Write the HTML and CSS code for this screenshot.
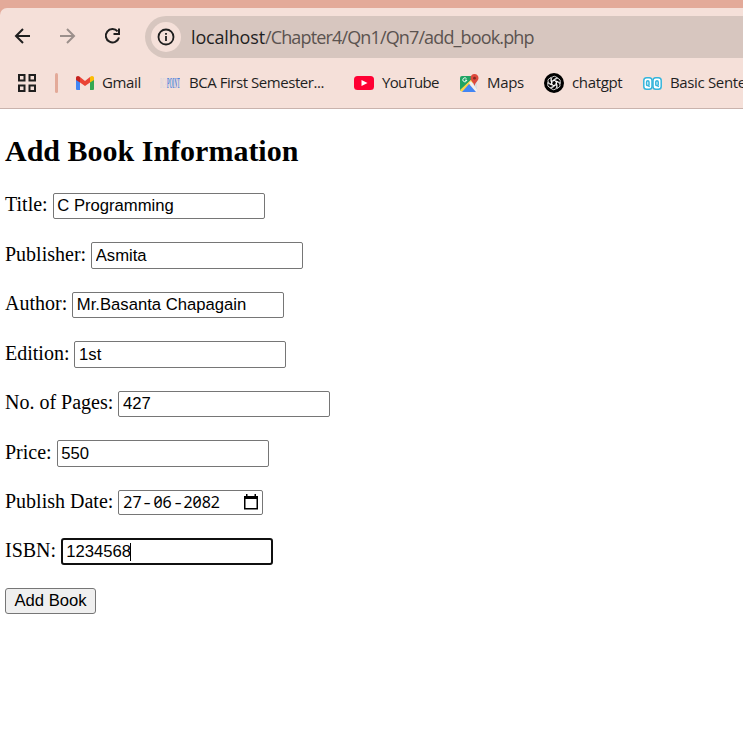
FILE: index.html
```
<!DOCTYPE html>
<html lang="en">
<head>
<meta charset="utf-8">
<title>Add Book</title>
<link rel="stylesheet" href="styles.css">
</head>
<body>
<header class="browser">
  <nav class="toolbar">
    <svg class="nav-icon" width="18" height="18" viewBox="0 0 18 18"><path d="M16 9H2M9 2 2 9l7 7"/></svg>
    <svg class="nav-icon faded" width="18" height="18" viewBox="0 0 18 18"><path d="M1 9h14M8 2l7 7-7 7"/></svg>
    <svg class="nav-icon" width="18" height="18" viewBox="0 0 18 18"><path d="M13.600 4.300A6.700 6.700 0 1 0 15 10.500M15 1.500v5.500h-5.500"/></svg>
    <div class="address">
      <span class="info"><svg width="18" height="18" viewBox="0 0 18 18"><circle cx="9" cy="9" r="7.5"/><path d="M9 8v5M9 5v1.8"/></svg></span>
      <span class="url"><b>localhost</b>/Chapter4/Qn1/Qn7/add_book.php</span>
    </div>
  </nav>
  <nav class="bookmarks">
    <svg class="apps" width="18" height="18" viewBox="0 0 18 18"><path d="M1 1h5.500v5.500H1zM11.500 1H17v5.500h-5.500zM1 11.500h5.500V17H1zM11.500 11.500H17V17h-5.500z"/></svg>
    <span class="divider"></span>
    <a class="mark gmail"><svg width="18" height="14" viewBox="0 0 18 14"><path fill="#4285f4" d="M0 3l4 3v8H1a1 1 0 0 1-1-1z"/><path fill="#34a853" d="M14 6l4-3v10a1 1 0 0 1-1 1h-3z"/><path fill="#ea4335" d="M4 1l5 4 5-4v5.500L9 10 4 6.500z"/><path fill="#c5221f" d="M0 2C0 0 2.400-.6 4 1v5.500L0 4z"/><path fill="#fbbc04" d="M14 1c1.600-1.600 4-1 4 1v2l-4 2.500z"/></svg><span>Gmail</span></a>
    <a class="mark bca"><span class="logo"><span class="bca-a">BCA</span><span class="bca-b">POINT</span></span><span>BCA First Semester...</span></a>
    <a class="mark youtube"><svg width="20" height="14" viewBox="0 0 20 14"><rect width="20" height="14" rx="3.500" fill="#ff0033"/><path fill="#fff" d="M7.500 4l6 3-6 3z"/></svg><span>YouTube</span></a>
    <a class="mark maps"><svg width="19" height="19" viewBox="0 0 19 19"><path fill="#1fa463" d="M2 2h13L0 17V4a2 2 0 0 1 2-2z"/><path fill="#dadce0" d="M10 8l7 8V6z"/><path fill="#fbd147" d="M0 16L14 3l2 3L2 18z"/><path fill="#f1f1f1" d="M9 9l2-2 6 9-1 2z"/><path fill="#4285f4" d="M2 18l7-8 7 8z"/><path fill="#dd4b3e" d="M14.500 0C12 0 10.500 2 10.500 4c0 3 3.200 4 4 8 .8-4 4-5 4-8 0-2-1.500-4-4-4z"/><circle cx="14.500" cy="4.200" r="1.400" fill="#822c25"/><path fill="none" stroke="#fff" stroke-width="1" d="M6.500 4.700a2 2 0 1 0 .3 1.500H5"/></svg><span>Maps</span></a>
    <a class="mark chatgpt"><svg width="20" height="20" viewBox="-10 -10 20 20"><circle r="10" fill="#000"/><g fill="none" stroke="#fff" stroke-width=".8"><path id="petal" d="M-2.500 1.300V-3.800A2.700 2.700 0 0 1 2-6L3.800-5M-2.500 1.300L0 2.800M-.3-1.500V-3.400L3.200-5.300"/><use href="#petal" transform="rotate(60)"/><use href="#petal" transform="rotate(120)"/><use href="#petal" transform="rotate(180)"/><use href="#petal" transform="rotate(240)"/><use href="#petal" transform="rotate(300)"/></g></svg><span>chatgpt</span></a>
    <a class="mark basic"><svg width="19" height="13" viewBox="0 0 19 13"><g fill="#fff" stroke="#35b5dc" stroke-width="1.500"><rect x=".8" y=".8" width="8.200" height="11.400" rx="2.800"/><rect x="10" y=".8" width="8.200" height="11.400" rx="2.800"/><path d="M6 8V5a1.200 1.200 0 0 0-2.400 0v2.500A1 1 0 0 0 5 8.500l1.800 1M15.200 8V5a1.200 1.200 0 0 0-2.400 0v2.500a1 1 0 0 0 1.400 1l1.800 1"/></g></svg><span>Basic Sentence</span></a>
  </nav>
</header>
<main>
  <h2>Add Book Information</h2>
  <form>
    <div class="row"><label for="title">Title:</label><input id="title" value="C Programming"></div>
    <div class="row"><label for="publisher">Publisher:</label><input id="publisher" value="Asmita"></div>
    <div class="row"><label for="author">Author:</label><input id="author" value="Mr.Basanta Chapagain"></div>
    <div class="row"><label for="edition">Edition:</label><input id="edition" value="1st"></div>
    <div class="row"><label for="pages">No. of Pages:</label><input id="pages" value="427"></div>
    <div class="row"><label for="price">Price:</label><input id="price" value="550"></div>
    <div class="row date-row"><label>Publish Date:</label><div class="date"><span>27</span><i>-</i><span>06</span><i>-</i><span>2082</span><svg width="14" height="16" viewBox="0 0 14 16"><path d="M0 2h2V0h1.500v2h7V0H12v2h2v13.500H0zM1.500 5v9h11V5z" fill-rule="evenodd"/></svg></div></div>
    <div class="row"><label>ISBN:</label><div class="active-field">1234568<span class="caret"></span></div></div>
    <button type="button">Add Book</button>
  </form>
</main>
</body>
</html>
```
FILE: styles.css
```
* { box-sizing: border-box; }
body { margin: 0; background: #fff; color: #000; overflow: hidden; }
.browser { height: 109px; padding-top: 8px; background: #e3aa99; overflow: hidden; }
.toolbar { height: 57px; background: #f5e0d9; border-top-left-radius: 7px; display: flex; align-items: center; padding-left: 14px; }
.nav-icon { flex: none; fill: none; stroke: #1f1f1f; stroke-width: 2; margin-right: 27px; margin-bottom: 1px; }
.nav-icon.faded { stroke: #9b8f8b; }
.address { flex: 1; height: 42px; margin-left: -4px; margin-top: 1px; background: #d7c6bf; border-radius: 21px 0 0 21px; display: flex; align-items: center; padding-left: 6px; }
.info { width: 30px; height: 30px; border-radius: 50%; background: #f5e0d9; display: flex; align-items: center; justify-content: center; }
.info svg { fill: none; stroke: #1f1f1f; stroke-width: 1.8; }
.url { font: 18px "Open Sans", sans-serif; color: #5b5350; margin-left: 10px; white-space: nowrap; letter-spacing: -.86px; }
.url b { font-weight: 400; color: #1f1f1f; letter-spacing: -.16px; }
.bookmarks { height: 44px; background: #f5e0d9; border-bottom: 1px solid #c9b3ad; display: flex; align-items: center; padding: 0 0 7px 18px; }
.apps { fill: none; stroke: #1f1f1f; stroke-width: 2; flex: none; }
.divider { flex: none; width: 3px; height: 20px; border-radius: 2px; background: #e3aa99; margin: 0 18px 0 19px; }
.mark { flex: none; display: flex; align-items: center; font: 15px/20px "Open Sans", sans-serif; color: #1f1f1f; white-space: nowrap; letter-spacing: -.35px; }
.mark > span:last-child { padding-bottom: 2px; }
.mark svg { flex: none; margin-right: 8px; }
.gmail { width: 84px; }
.bca { width: 194px; letter-spacing: -.45px; }
.logo { width: 21px; height: 18px; margin-right: 8px; display: flex; align-items: center; gap: 1px; letter-spacing: 0; }
.bca-a, .bca-b { flex: none; font: 700 15px/18px "Liberation Serif", serif; transform-origin: left center; }
.bca-a { width: 32px; margin-right: -26px; transform: scaleX(.22); color: #ded9de; }
.bca-b { width: 50px; margin-right: -37px; transform: scaleX(.27); color: #4d84dc; }
.youtube { width: 106px; letter-spacing: -.7px; }
.maps { width: 84px; }
.chatgpt { width: 99px; }
main { padding: 0 5px; font: 20px "Liberation Serif", serif; }
h2 { font-size: 30px; line-height: 34px; margin: 25px 0 24.8px; }
.row { height: 49.5px; display: flex; align-items: baseline; }
.row label { margin-right: 5px; white-space: nowrap; }
input, .active-field { width: 212px; height: 26.5px; border: 1px solid #767676; border-radius: 2px; padding: 1px 3.6px; font: 16.67px "Liberation Sans", sans-serif; background: #fff; color: #000; outline: 0; }
.date-row { height: 48.5px; }
.date { width: 145px; height: 25px; border: 1px solid #767676; border-radius: 2px; padding: 0 4px; display: flex; align-items: baseline; font: 16px/23px "Noto Sans", sans-serif; font-variant-numeric: slashed-zero; }
.date i { width: 12px; text-align: center; font-style: normal; transform: scaleX(1.4); }
.date span { letter-spacing: -.1px; }
.date svg { margin-left: auto; align-self: center; }
.active-field { border: 2px solid #101010; border-radius: 3px; line-height: 23px; padding: 0 3px; }
.caret { display: inline-block; width: 1px; height: 18px; margin-left: -1px; background: #000; vertical-align: -4px; }
button { display: block; width: 91px; height: 26px; padding: 0; border: 1px solid #767676; border-radius: 3px; background: #efefef; color: #000; font: 16.67px "Liberation Sans", sans-serif; }
```
